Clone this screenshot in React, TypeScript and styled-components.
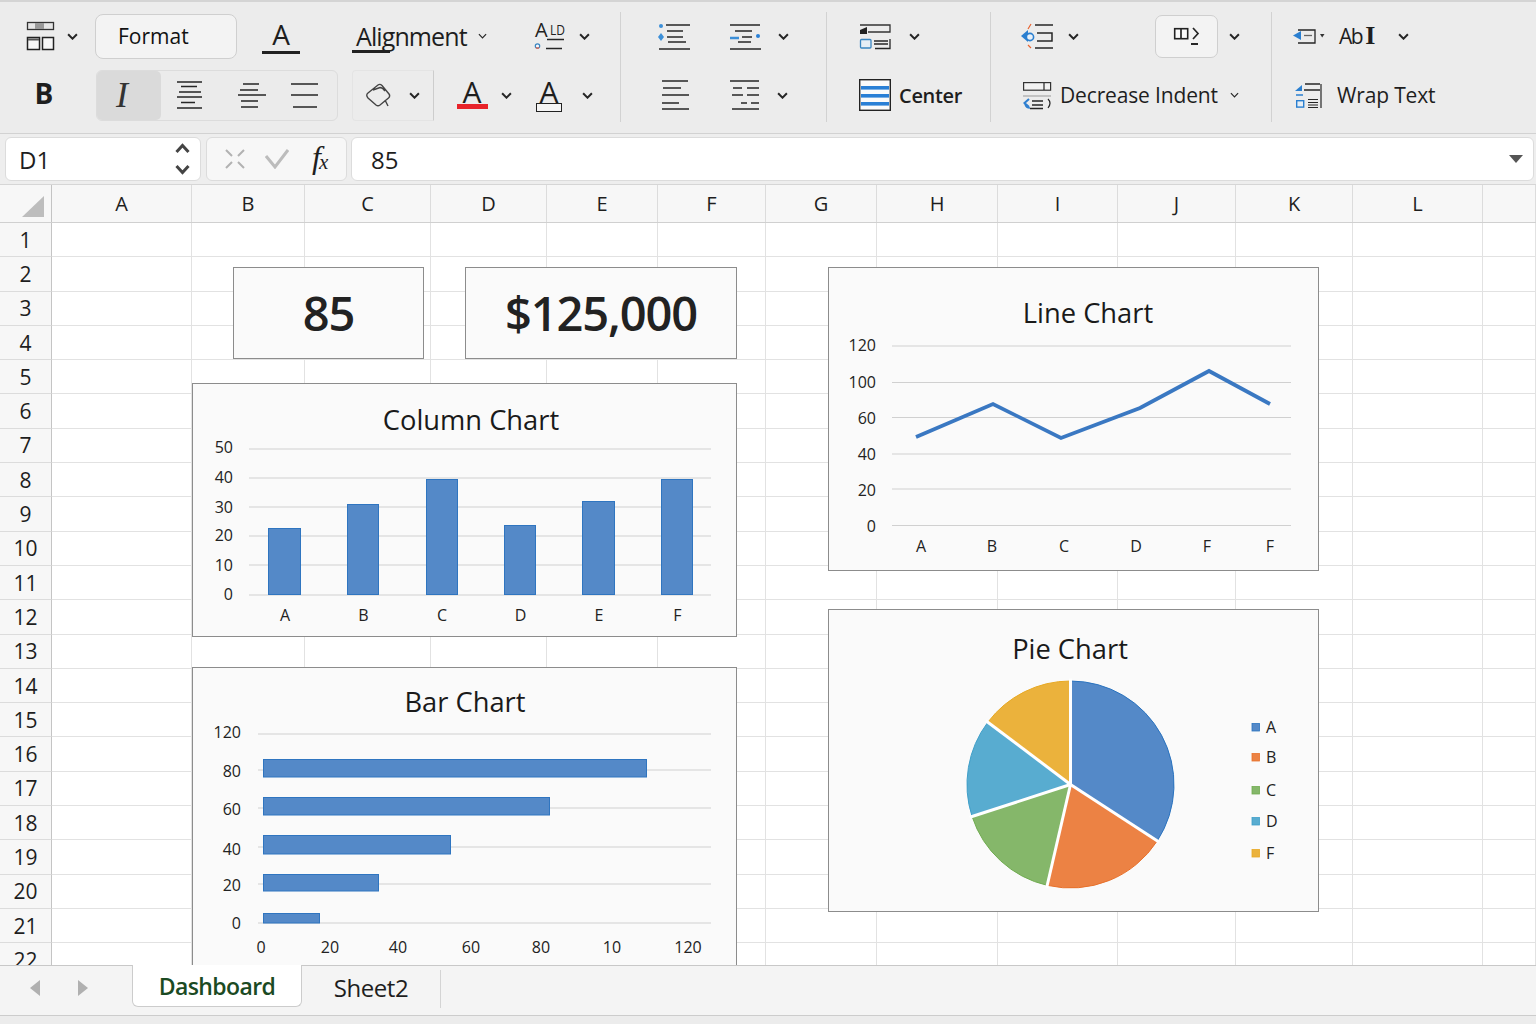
import React from "react";
import styled, { createGlobalStyle } from "styled-components";

const UI_FONT = `"Open Sans", "Noto Sans", sans-serif`;
const INK = "#1e1e1e";

const GlobalStyle = createGlobalStyle`
    html, body { margin: 0; padding: 0; background: #ececec; }
    body { font-family: ${UI_FONT}; color: ${INK}; }
    * { box-sizing: border-box; }
`;

const COLUMNS = ["A", "B", "C", "D", "E", "F", "G", "H", "I", "J", "K", "L"];
const COLUMN_TEMPLATE = "52px 140px 113px 126px 116px 111px 108px 111px 121px 120px 118px 117px 130px 1fr";
const ROWS = Array.from({ length: 22 }, (_, i) => i + 1);

const COLUMN_BARS = [
    { x: 268, w: 33, top: 528 },
    { x: 347, w: 32, top: 504 },
    { x: 426, w: 32, top: 479 },
    { x: 504, w: 32, top: 525 },
    { x: 582, w: 33, top: 501 },
    { x: 661, w: 32, top: 479 },
];
const HORIZONTAL_BARS = [
    { end: 647, top: 759, bottom: 777 },
    { end: 550, top: 797, bottom: 815 },
    { end: 451, top: 835, bottom: 854 },
    { end: 379, top: 874, bottom: 891 },
    { end: 320, top: 913, bottom: 923 },
];
const PIE_SLICES = [
    { label: "A", from: 0, to: 123, fill: "#5489c8", edge: "#2a73bf", y: 727 },
    { label: "B", from: 123, to: 193, fill: "#ec8244", edge: "#e8702a", y: 757 },
    { label: "C", from: 193, to: 252, fill: "#85b76a", edge: "#6fab4f", y: 790 },
    { label: "D", from: 252, to: 307, fill: "#58acd0", edge: "#3f9fc9", y: 821 },
    { label: "F", from: 307, to: 360, fill: "#ebb23c", edge: "#e8a924", y: 853 },
];

const polar = (deg: number, r: number) => {
    const a = (deg * Math.PI) / 180;
    return [1070.5 + r * Math.sin(a), 784.5 - r * Math.cos(a)];
};

const slicePath = (from: number, to: number) => {
    const [x1, y1] = polar(from, 103.5);
    const [x2, y2] = polar(to, 103.5);
    return `M1070.5 784.5L${x1} ${y1}A103.5 103.5 0 ${to - from > 180 ? 1 : 0} 1 ${x2} ${y2}Z`;
};

interface IconProps {
    box: [number, number, number, number];
    children: React.ReactNode;
}

// icons are drawn in page coordinates, the viewBox cuts out their spot
const Icon: React.FC<IconProps> = ({ box, children }) => (
    <IconSvg width={box[2]} height={box[3]} viewBox={box.join(" ")}>
        {children}
    </IconSvg>
);

const Chevron: React.FC<{ thin?: boolean }> = ({ thin }) => (
    <ChevronSvg viewBox="0 0 10 6" $thin={thin}>
        <path d="M1 1l4 4 4-4" />
    </ChevronSvg>
);

const Ink: React.FC<{ d: string; w?: number; c?: string }> = ({ d, w = 1.5, c = "#262626" }) => (
    <path d={d} stroke={c} strokeWidth={w} fill="none" />
);

const TableIcon = () => (
    <Icon box={[26, 20, 30, 31]}>
        <rect x="27.5" y="21.5" width="26" height="7" fill="#e6e6e6" stroke="#333" strokeWidth="1.3" />
        <rect x="35" y="22" width="9" height="6" fill="#999" />
        <rect x="27.5" y="36.5" width="12" height="12" fill="#f7f7f7" stroke="#222" strokeWidth="1.5" />
        <rect x="42.5" y="36.5" width="11" height="12" fill="#f7f7f7" stroke="#222" strokeWidth="1.5" />
        <Ink d="M28 38.5H39" w={2} c="#555" />
    </Icon>
);

const AlignOne = () => (
    <Icon box={[175, 79, 29, 30]}>
        <Ink d="M177 81H202M181 85.5H197M179 91H201M177 96H202M181 101.5H195M177 107H202" />
    </Icon>
);
const AlignTwo = () => (
    <Icon box={[236, 80, 31, 29]}>
        <Ink d="M243 83H259M240 89H258M238 94H266M241 100H258M241 106H258" />
    </Icon>
);
const AlignThree = () => (
    <Icon box={[289, 80, 29, 29]}>
        <Ink d="M290 83H317M290 94H317M292 106H316" />
    </Icon>
);

const PaintIcon = () => (
    <Icon box={[364, 79, 26, 27]}>
        <Ink
            d="M367 90L377 82Q379 80.5 381 82.5L388 91Q389.5 93 387.5 95L379 102Q377 103.5 375 102L367 95Q364.5 92 367 90ZM372 87L379 84.5Q381.5 84.5 384 88M384 97L387 103"
            w={1.4}
            c="#444"
        />
    </Icon>
);

const AldIcon = () => (
    <Icon box={[533, 14, 35, 44]}>
        <text x="535" y="37" fontFamily={UI_FONT} fontSize="20" fill="#222">A</text>
        <text x="550" y="35" fontFamily={UI_FONT} fontSize="15" fill="#222" textLength="15" lengthAdjust="spacingAndGlyphs">LD</text>
        <Ink d="M547 39.5H564M546 48.5H562" />
        <circle cx="537.5" cy="46" r="2.2" fill="#f4f8fc" stroke="#3a85c0" strokeWidth="1.2" />
        <path d="M536 47.5a2.2 2.2 0 0 0 3 0" stroke="#e2624a" strokeWidth="1.2" fill="none" />
    </Icon>
);

const IndentLeftIcon = () => (
    <Icon box={[659, 21, 34, 29]}>
        <Ink d="M667 24H691M668 30H684M668 36H684M669 41H687M660 48H691" />
        <circle cx="662" cy="25" r="2" fill="#3c8fd8" />
        <path d="M662 32L665 36L662 40L659 36Z" fill="#3c8fd8" />
    </Icon>
);
const IndentRightIcon = () => (
    <Icon box={[729, 21, 33, 29]}>
        <Ink d="M730 24H760M735 30H752M742 36H752M738 41H751M730 48H761" />
        <Ink d="M730 37H739" w={2.5} c="#3c8fd8" />
        <circle cx="758" cy="35" r="2" fill="#2a80d6" />
    </Icon>
);
const LeftLinesIcon = () => (
    <Icon box={[660, 79, 29, 32]}>
        <Ink d="M661 81H687M662 88H680M661 95H688M661 103H678M661 109H688" />
    </Icon>
);
const DashLinesIcon = () => (
    <Icon box={[729, 79, 31, 32]}>
        <Ink d="M729 81H758M731 95H742M746 95H758M732 88H741M746 88H758M740 103H746M750 103H758M731 109H758" />
    </Icon>
);

const MergeIcon = () => (
    <Icon box={[859, 24, 33, 27]}>
        <path d="M860 31L867 28V35H860Z" fill="#222" />
        <Ink d="M860 26H890V33H868" w={1.3} c="#333" />
        <rect x="860.5" y="40.5" width="10.5" height="8.5" rx="1" fill="#e6eef5" stroke="#3a85c0" strokeWidth="1.3" />
        <Ink d="M874 42H888M874 45H888" w={1.6} />
        <Ink d="M875 49.5H890V40" w={1.3} />
    </Icon>
);
const StripesIcon = () => (
    <Icon box={[859, 79, 32, 32]}>
        <rect x="859.7" y="79.7" width="30.6" height="30.6" fill="#fbfbfb" stroke="#222" strokeWidth="1.4" />
        <rect x="861" y="86" width="28" height="3.6" fill="#2a80d6" />
        <rect x="861" y="94" width="28" height="3.6" fill="#2a80d6" />
        <rect x="861" y="102" width="28" height="3.6" fill="#2a80d6" />
    </Icon>
);

const OutdentIcon = () => (
    <Icon box={[1020, 22, 34, 28]}>
        <Ink d="M1035 25H1053M1037 33H1052V41H1037M1035 48H1053" />
        <path d="M1021 36L1028 30V42Z" fill="#2a7fd0" />
        <circle cx="1030" cy="37" r="3.6" fill="#e9f1f9" stroke="#2a7fd0" strokeWidth="1.6" />
        <Ink d="M1031 24L1028 29M1028 45L1031 48" w={1.2} c="#e8622f" />
    </Icon>
);
const ShapeIcon = () => (
    <Icon box={[1168, 28, 27, 20]}>
        <rect x="1169.7" y="30.7" width="13" height="10" fill="#fafafa" stroke="#222" strokeWidth="1.6" />
        <Ink d="M1176 31V41M1188 30L1193 35.5L1188 41" w={1.7} />
        <Ink d="M1186 46H1193" w={2} />
    </Icon>
);
const DecreaseIcon = () => (
    <Icon box={[1022, 80, 30, 29]}>
        <rect x="1023.6" y="81.6" width="27" height="7.6" fill="#f2f2f2" stroke="#333" strokeWidth="1.2" />
        <Ink d="M1044 82V89" w={1.2} />
        <Ink d="M1023 95H1051" w={1} c="#999" />
        <Ink d="M1029 98L1024.5 102L1029 106" w={2} c="#2f7fd0" />
        <Ink d="M1025 103Q1026 107 1030 107" w={1.5} c="#2f7fd0" />
        <Ink d="M1032 100H1043M1032 104H1043M1030 107.5H1043" w={1.3} />
        <Ink d="M1048 98Q1052 102 1048 107" w={1.2} />
    </Icon>
);
const ArrowBoxIcon = () => (
    <Icon box={[1292, 30, 33, 17]}>
        <path d="M1293 37.5L1301 33V42Z" fill="#2a7fd0" />
        <Ink d="M1298 32H1315V45H1298" w={1.3} />
        <Ink d="M1304 37.5H1312" w={1.3} c="#666" />
        <path d="M1320 36H1324.5L1322.2 39.5Z" fill="#333" />
    </Icon>
);
const WrapIcon = () => (
    <Icon box={[1294, 82, 29, 27]}>
        <path d="M1295 91L1302 85V91Z" fill="#2a7fd0" />
        <Ink d="M1305 84H1320M1304 90H1320" w={1.3} />
        <Ink d="M1296 95H1303" w={1.5} c="#2a7fd0" />
        <rect x="1296.7" y="100.7" width="7" height="6.4" fill="#e6eef5" stroke="#2a7fd0" strokeWidth="1.4" />
        <Ink d="M1308 99.5H1318M1308 102.5H1318M1308 105H1318M1308 107.5H1318" w={1.2} />
        <Ink d="M1321 84V108" w={1.2} />
    </Icon>
);

const ColumnChart = () => (
    <ChartPanel $x={192} $y={383} $w={545} $h={254}>
        <ChartSvg viewBox="192 383 545 254">
            <ChartTitle x={471} y={430}>Column Chart</ChartTitle>
            {[449, 478, 507, 536, 565].map((y) => <GridLine key={y} x1={249} x2={711} y1={y} y2={y} />)}
            <GridLine x1={249} x2={711} y1={595} y2={595} strokeWidth={1.6} />
            {COLUMN_BARS.map((b) => (
                <BarRect key={b.x} x={b.x + 0.5} y={b.top + 0.5} width={b.w - 1} height={594 - b.top} />
            ))}
            {[["50", 453], ["40", 483], ["30", 513], ["20", 541], ["10", 571], ["0", 600]].map(([t, y]) => (
                <AxisText key={t} x={233} y={y} textAnchor="end">{t}</AxisText>
            ))}
            {["A", "B", "C", "D", "E", "F"].map((t, i) => (
                <AxisText key={t} x={285 + i * 78.5} y={621} textAnchor="middle">{t}</AxisText>
            ))}
        </ChartSvg>
    </ChartPanel>
);

const BarChart = () => (
    <ChartPanel $x={192} $y={667} $w={545} $h={340}>
        <ChartSvg viewBox="192 667 545 340">
            <ChartTitle x={465} y={712}>Bar Chart</ChartTitle>
            {[734, 770, 808, 884, 923].map((y) => <GridLine key={y} x1={258} x2={711} y1={y} y2={y} />)}
            <GridLine x1={258} x2={711} y1={847} y2={847} strokeWidth={1.6} />
            {HORIZONTAL_BARS.map((b) => (
                <BarRect key={b.end} x={263.5} y={b.top + 0.5} width={b.end - 264} height={b.bottom - b.top - 0.5} />
            ))}
            {[["120", 738], ["80", 777], ["60", 815], ["40", 855], ["20", 891], ["0", 929]].map(([t, y]) => (
                <AxisText key={t} x={241} y={y} textAnchor="end">{t}</AxisText>
            ))}
            {[["0", 261], ["20", 330], ["40", 398], ["60", 471], ["80", 541], ["10", 612], ["120", 688]].map(([t, x]) => (
                <AxisText key={String(x)} x={x} y={953} textAnchor="middle">{t}</AxisText>
            ))}
        </ChartSvg>
    </ChartPanel>
);

const LineChart = () => (
    <ChartPanel $x={828} $y={267} $w={491} $h={304}>
        <ChartSvg viewBox="828 267 491 304">
            <ChartTitle x={1088} y={323}>Line Chart</ChartTitle>
            {[346, 382.5, 417.5, 454, 489, 525.5].map((y) => <GridLine key={y} x1={892} x2={1291} y1={y} y2={y} />)}
            <polyline
                points="916,437 993,404 1061,438 1140,408 1209,371 1270,404"
                fill="none"
                stroke="#3a78c2"
                strokeWidth="3.8"
            />
            {[["120", 351], ["100", 388], ["60", 424], ["40", 460], ["20", 496], ["0", 532]].map(([t, y]) => (
                <AxisText key={t} x={876} y={y} textAnchor="end">{t}</AxisText>
            ))}
            {[["A", 921], ["B", 992], ["C", 1064], ["D", 1136], ["F", 1207], ["F", 1270]].map(([t, x]) => (
                <AxisText key={String(x)} x={x} y={552} textAnchor="middle">{t}</AxisText>
            ))}
        </ChartSvg>
    </ChartPanel>
);

const PieChart = () => (
    <ChartPanel $x={828} $y={609} $w={491} $h={303}>
        <ChartSvg viewBox="828 609 491 303">
            <ChartTitle x={1070} y={659}>Pie Chart</ChartTitle>
            {PIE_SLICES.map((s) => (
                <path key={s.label} d={slicePath(s.from, s.to)} fill={s.fill} stroke={s.edge} strokeWidth="1" />
            ))}
            {PIE_SLICES.map((s) => {
                const [x, y] = polar(s.from, 106);
                return <line key={s.label} x1={1070.5} y1={784.5} x2={x} y2={y} stroke="#fff" strokeWidth="3" />;
            })}
            {PIE_SLICES.map((s) => (
                <g key={s.label}>
                    <rect x={1252} y={s.y - 3.5} width={7.5} height={7.5} fill={s.fill} stroke={s.edge} strokeWidth="0.8" />
                    <AxisText x={1266} y={s.y + 6}>{s.label}</AxisText>
                </g>
            ))}
        </ChartSvg>
    </ChartPanel>
);

const App: React.FC = () => (
    <Page>
        <GlobalStyle />
        <Ribbon>
            <RibbonGroup $w={620}>
                <RibbonRow>
                    <Slot $w={32} $ml={25}><TableIcon /></Slot>
                    <Slot $w={30}><Chevron /></Slot>
                    <FormatButton>Format</FormatButton>
                    <Slot $w={88}><FontLetter $bar="#222">A</FontLetter></Slot>
                    <AlignmentLabel>Alignment</AlignmentLabel>
                    <Slot $w={24}><Chevron thin /></Slot>
                    <Slot $w={35} $ml={39}><AldIcon /></Slot>
                    <Slot $w={33}><Chevron /></Slot>
                </RibbonRow>
                <RibbonRow>
                    <Slot $w={48} $ml={20}><BoldLetter>B</BoldLetter></Slot>
                    <Segment>
                        <ActiveCell>I</ActiveCell>
                        <Slot $w={56}><AlignOne /></Slot>
                        <Slot $w={68}><AlignTwo /></Slot>
                        <Slot $w={38}><AlignThree /></Slot>
                    </Segment>
                    <PaintGroup>
                        <Slot $w={50}><PaintIcon /></Slot>
                        <Slot $w={22}><Chevron /></Slot>
                    </PaintGroup>
                    <Slot $w={32} $ml={22}><ColorLetter $bar="#e8232a">A</ColorLetter></Slot>
                    <Slot $w={36}><Chevron /></Slot>
                    <Slot $w={50}><ColorLetter $bar="transparent" $boxed>A</ColorLetter></Slot>
                    <Slot $w={26}><Chevron /></Slot>
                </RibbonRow>
            </RibbonGroup>
            <Separator />
            <RibbonGroup $w={205}>
                <RibbonRow>
                    <Slot $w={108}><IndentLeftIcon /></Slot>
                    <Slot $w={32}><IndentRightIcon /></Slot>
                    <Slot $w={42}><Chevron /></Slot>
                </RibbonRow>
                <RibbonRow>
                    <Slot $w={108}><LeftLinesIcon /></Slot>
                    <Slot $w={32}><DashLinesIcon /></Slot>
                    <Slot $w={42}><Chevron /></Slot>
                </RibbonRow>
            </RibbonGroup>
            <Separator />
            <RibbonGroup $w={163}>
                <RibbonRow>
                    <Slot $w={32} $ml={32}><MergeIcon /></Slot>
                    <Slot $w={44}><Chevron /></Slot>
                </RibbonRow>
                <RibbonRow>
                    <Slot $w={32} $ml={32}><StripesIcon /></Slot>
                    <CenterLabel>Center</CenterLabel>
                </RibbonRow>
            </RibbonGroup>
            <Separator />
            <RibbonGroup $w={280}>
                <RibbonRow>
                    <Slot $w={34} $ml={29}><OutdentIcon /></Slot>
                    <Slot $w={38}><Chevron /></Slot>
                    <ShapeButton><ShapeIcon /></ShapeButton>
                    <Slot $w={32}><Chevron /></Slot>
                </RibbonRow>
                <RibbonRow>
                    <Slot $w={30} $ml={31}><DecreaseIcon /></Slot>
                    <RibbonLabel $ml={8} $w={160}>Decrease Indent</RibbonLabel>
                    <Slot $w={28}><Chevron thin /></Slot>
                </RibbonRow>
            </RibbonGroup>
            <Separator />
            <RibbonGroup $w={264}>
                <RibbonRow>
                    <Slot $w={33} $ml={20}><ArrowBoxIcon /></Slot>
                    <AbLabel>Ab<AbCursor>I</AbCursor></AbLabel>
                    <Slot $w={54}><Chevron /></Slot>
                </RibbonRow>
                <RibbonRow>
                    <Slot $w={29} $ml={22}><WrapIcon /></Slot>
                    <RibbonLabel $ml={14} $w={110}>Wrap Text</RibbonLabel>
                </RibbonRow>
            </RibbonGroup>
        </Ribbon>

        <FormulaBar>
            <NameBox>
                D1
                <Stepper width="15" height="32" viewBox="0 0 15 32">
                    <path d="M1.5 9L7.5 2.5L13.5 9M1.5 23L7.5 29.5L13.5 23" />
                </Stepper>
            </NameBox>
            <FunctionBox>
                <svg width="20" height="20" viewBox="0 0 20 20">
                    <path d="M1 1L7 7M19 1L13 7M1 19L7 13M19 19L13 13" stroke="#b2b2b2" strokeWidth="2" fill="none" />
                </svg>
                <svg width="24" height="20" viewBox="0 0 24 20">
                    <path d="M1 7L10 18L23 1" stroke="#bcbcbc" strokeWidth="3" fill="none" />
                </svg>
                <FxLabel>f<sub>x</sub></FxLabel>
            </FunctionBox>
            <FormulaInput>
                85
                <FormulaCaret />
            </FormulaInput>
        </FormulaBar>

        <Sheet>
            <HeaderRow>
                <Corner><CornerMark /></Corner>
                {COLUMNS.map((c) => <ColumnHead key={c}>{c}</ColumnHead>)}
                <ColumnHead />
            </HeaderRow>
            {ROWS.map((r) => (
                <SheetRow key={r}>
                    <RowHead>{r}</RowHead>
                    {COLUMNS.map((c) => <Cell key={c} />)}
                    <Cell />
                </SheetRow>
            ))}
            <KpiCard $x={233} $y={267} $w={191} $h={92}>85</KpiCard>
            <KpiCard $x={465} $y={267} $w={272} $h={92}>$125,000</KpiCard>
            <ColumnChart />
            <BarChart />
            <LineChart />
            <PieChart />
        </Sheet>

        <TabBar>
            <TabArrows>
                <TabArrow $dir="left" />
                <TabArrow $dir="right" />
            </TabArrows>
            <ActiveTab>Dashboard</ActiveTab>
            <PlainTab>Sheet2</PlainTab>
        </TabBar>
        <StatusBar />
    </Page>
);

export default App;

const Page = styled.div`
    width: 1536px;
    height: 1024px;
    display: flex;
    flex-direction: column;
    overflow: hidden;
    background: #ececec;
`;
const Ribbon = styled.div`
    flex: 0 0 134px;
    display: flex;
    background: #ececec;
    border-top: 2px solid #d4d4d4;
    border-bottom: 1px solid #d2d2d2;
`;
const RibbonGroup = styled.div<{ $w: number }>`
    flex: 0 0 ${(p) => p.$w}px;
    display: flex;
    flex-direction: column;
    gap: 1px;
    padding-top: 5px;
`;
const RibbonRow = styled.div`
    height: 58px;
    display: flex;
    align-items: center;
`;
const Separator = styled.div`
    flex: 0 0 1px;
    height: 110px;
    margin-top: 10px;
    background: #d2d2d2;
`;
const Slot = styled.div<{ $w: number; $ml?: number }>`
    flex: 0 0 ${(p) => p.$w}px;
    margin-left: ${(p) => p.$ml || 0}px;
    display: flex;
    justify-content: center;
    align-items: center;
`;
const IconSvg = styled.svg`
    display: block;
    flex: none;
`;
const ChevronSvg = styled.svg<{ $thin?: boolean }>`
    width: ${(p) => (p.$thin ? 9 : 11)}px;
    height: ${(p) => (p.$thin ? 6 : 7)}px;
    path {
        fill: none;
        stroke: #262626;
        stroke-width: ${(p) => (p.$thin ? 1.3 : 1.8)};
    }
`;
const FormatButton = styled.div`
    flex: 0 0 142px;
    height: 45px;
    margin-left: 8px;
    padding-left: 22px;
    display: flex;
    align-items: center;
    font-size: 21px;
    color: #111;
    background: #f3f3f3;
    border: 1px solid #cfcfcf;
    border-radius: 8px;
`;
const FontLetter = styled.div<{ $bar: string }>`
    width: 38px;
    height: 36px;
    text-align: center;
    font-size: 28px;
    line-height: 32px;
    border-bottom: 3px solid ${(p) => p.$bar};
`;
const AlignmentLabel = styled.div`
    flex: 0 0 118px;
    margin-left: 27px;
    padding-left: 4px;
    position: relative;
    font-size: 25px;
    line-height: 30px;
    letter-spacing: -0.9px;
    white-space: nowrap;
    &::after {
        content: "";
        position: absolute;
        left: 0;
        bottom: -2px;
        width: 38px;
        height: 3px;
        background: #222;
    }
`;
const BoldLetter = styled.div`
    margin-top: -4px;
    font-size: 28px;
    font-weight: 700;
`;
const Segment = styled.div`
    flex: 0 0 242px;
    height: 51px;
    margin-left: 28px;
    display: flex;
    align-items: center;
    background: #ebebeb;
    border: 1px solid #dcdcdc;
    border-radius: 6px;
`;
const ActiveCell = styled.div`
    flex: 0 0 64px;
    height: 100%;
    padding-right: 14px;
    display: flex;
    justify-content: center;
    align-items: center;
    font-family: "Liberation Serif", serif;
    font-style: italic;
    font-size: 36px;
    color: #333;
    background: #dadada;
    border-radius: 5px;
`;
const PaintGroup = styled.div`
    flex: 0 0 82px;
    height: 51px;
    margin-left: 14px;
    display: flex;
    align-items: center;
    border: 1px solid #e4e4e4;
    border-right: 1px solid #cdcdcd;
    border-radius: 4px 0 0 4px;
`;
const ColorLetter = styled.div<{ $bar: string; $boxed?: boolean }>`
    position: relative;
    width: ${(p) => (p.$boxed ? 26 : 31)}px;
    height: 40px;
    text-align: center;
    font-size: 30px;
    line-height: 33px;
    &::after {
        content: "";
        position: absolute;
        left: 0;
        right: 0;
        bottom: ${(p) => (p.$boxed ? 3 : 6)}px;
        height: ${(p) => (p.$boxed ? 7 : 5)}px;
        background: ${(p) => (p.$boxed ? "#f4f4f4" : p.$bar)};
        border: ${(p) => (p.$boxed ? "1.5px solid #222" : "none")};
    }
`;
const CenterLabel = styled.div`
    margin-left: 8px;
    font-size: 20px;
    font-weight: 600;
    letter-spacing: -0.3px;
`;
const RibbonLabel = styled.div<{ $ml: number; $w: number }>`
    flex: 0 0 ${(p) => p.$w}px;
    margin-left: ${(p) => p.$ml}px;
    font-size: 21px;
    letter-spacing: -0.15px;
    white-space: nowrap;
`;
const ShapeButton = styled.div`
    flex: 0 0 63px;
    height: 43px;
    margin-left: 63px;
    display: flex;
    justify-content: center;
    align-items: center;
    background: #f3f3f3;
    border: 1px solid #cfcfcf;
    border-radius: 7px;
`;
const AbLabel = styled.div`
    flex: 0 0 37px;
    margin-left: 14px;
    font-size: 21px;
    letter-spacing: -1.5px;
    white-space: nowrap;
`;
const AbCursor = styled.span`
    font-family: "Liberation Serif", serif;
    font-weight: 700;
    font-size: 26px;
    margin-left: 3px;
`;
const FormulaBar = styled.div`
    flex: 0 0 51px;
    padding: 3px 2px 2px 5px;
    display: flex;
    gap: 5px;
    background: #eeeeee;
    border-bottom: 1px solid #d6d6d6;
`;
const FieldBox = styled.div`
    height: 44px;
    display: flex;
    align-items: center;
    background: #ffffff;
    border: 1px solid #dcdcdc;
    border-radius: 6px;
    font-size: 24px;
`;
const NameBox = styled(FieldBox)`
    flex: 0 0 196px;
    padding: 0 10px 0 13px;
    justify-content: space-between;
`;
const Stepper = styled.svg`
    display: block;
    path {
        fill: none;
        stroke: #444;
        stroke-width: 3;
    }
`;
const FunctionBox = styled(FieldBox)`
    flex: 0 0 141px;
    margin-right: -1px;
    padding-left: 18px;
    gap: 20px;
    background: #f7f7f7;
`;
const FxLabel = styled.div`
    margin-left: 3px;
    font-family: "Liberation Serif", serif;
    font-style: italic;
    font-size: 32px;
    line-height: 30px;
    sub {
        font-size: 21px;
        vertical-align: -1px;
        margin-left: -2px;
    }
`;
const FormulaInput = styled(FieldBox)`
    flex: 1;
    padding: 0 10px 0 19px;
    justify-content: space-between;
`;
const FormulaCaret = styled.div`
    width: 0;
    height: 0;
    border-left: 7px solid transparent;
    border-right: 7px solid transparent;
    border-top: 8px solid #555;
`;
const Sheet = styled.div`
    flex: 0 0 780px;
    position: relative;
    overflow: hidden;
    background: #ffffff;
`;
const HeaderRow = styled.div`
    height: 38px;
    display: grid;
    grid-template-columns: ${COLUMN_TEMPLATE};
    background: #f7f7f7;
    border-bottom: 1px solid #d0d0d0;
`;
const Corner = styled.div`
    padding: 11px 7px 5px 22px;
    border-right: 1px solid #c4c4c4;
`;
const CornerMark = styled.div`
    width: 100%;
    height: 100%;
    background: #bdbdbd;
    clip-path: polygon(100% 0, 100% 100%, 0 100%);
`;
const ColumnHead = styled.div`
    display: flex;
    justify-content: center;
    align-items: center;
    font-size: 20px;
    border-right: 1px solid #dcdcdc;
`;
const SheetRow = styled.div`
    height: 34.3px;
    display: grid;
    grid-template-columns: ${COLUMN_TEMPLATE};
`;
const RowHead = styled.div`
    display: flex;
    justify-content: center;
    align-items: center;
    font-size: 21px;
    background: #f7f7f7;
    border-right: 1px solid #c4c4c4;
    border-bottom: 1px solid #dcdcdc;
`;
const Cell = styled.div`
    border-right: 1px solid #e2e2e2;
    border-bottom: 1px solid #e2e2e2;
`;
const Floating = styled.div<{ $x: number; $y: number; $w: number; $h: number }>`
    position: absolute;
    left: ${(p) => p.$x}px;
    top: ${(p) => p.$y - 185}px;
    width: ${(p) => p.$w}px;
    height: ${(p) => p.$h}px;
    background: #fafafa;
    outline: 1.5px solid #8c8c8c;
    outline-offset: -1px;
`;
const KpiCard = styled(Floating)`
    display: flex;
    justify-content: center;
    align-items: center;
    font-size: 47px;
    font-weight: 600;
    letter-spacing: -1.1px;
    color: #222;
`;
const ChartPanel = styled(Floating)``;
const ChartSvg = styled.svg`
    display: block;
    width: 100%;
    height: 100%;
    font-family: ${UI_FONT};
`;
const ChartTitle = styled.text`
    font-size: 27.3px;
    fill: #1a1a1a;
    text-anchor: middle;
`;
const AxisText = styled.text`
    font-size: 16px;
    fill: #222;
`;
const GridLine = styled.line`
    stroke: #d0d0d0;
    stroke-width: 1;
`;
const BarRect = styled.rect`
    fill: #5489c8;
    stroke: #2f75c0;
    stroke-width: 1;
`;
const TabBar = styled.div`
    flex: 0 0 51px;
    display: flex;
    align-items: flex-start;
    background: #f4f4f4;
    border-top: 1px solid #c8c8c8;
    border-bottom: 1px solid #cccccc;
`;
const TabArrows = styled.div`
    flex: 0 0 132px;
    height: 44px;
    padding: 0 44px 0 30px;
    display: flex;
    justify-content: space-between;
    align-items: center;
`;
const TabArrow = styled.div<{ $dir: "left" | "right" }>`
    width: 0;
    height: 0;
    border-top: 8px solid transparent;
    border-bottom: 8px solid transparent;
    border-${(p) => (p.$dir === "left" ? "right" : "left")}: 10px solid #b0b0b0;
`;
const ActiveTab = styled.div`
    flex: 0 0 170px;
    height: 42px;
    margin-top: -1px;
    display: flex;
    justify-content: center;
    align-items: center;
    font-size: 23px;
    font-weight: 600;
    letter-spacing: -0.6px;
    color: #1b4a23;
    background: #ffffff;
    border: 1px solid #cccccc;
    border-top: none;
    border-radius: 0 0 6px 6px;
`;
const PlainTab = styled.div`
    flex: 0 0 139px;
    height: 38px;
    margin-top: 4px;
    padding-bottom: 3px;
    display: flex;
    justify-content: center;
    align-items: center;
    font-size: 24px;
    letter-spacing: -0.4px;
    border-right: 1px solid #d4d4d4;
`;
const StatusBar = styled.div`
    flex: 1;
    background: #ececec;
`;
